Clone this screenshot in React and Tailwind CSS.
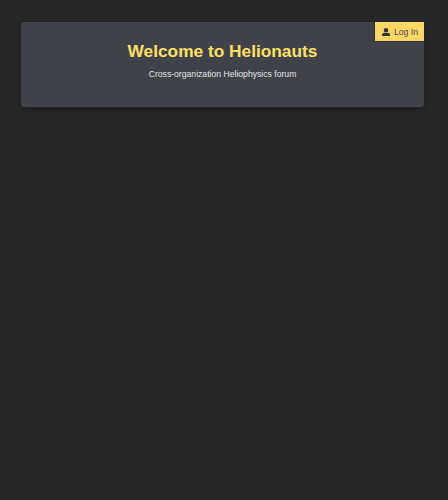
function UserIcon() {
  return (
    <svg viewBox="0 0 8 8" className="h-2 w-2 shrink-0 fill-[#30343d]" aria-hidden="true">
      <circle cx="4" cy="2.2" r="2.2" />
      <path d="M0 8V6.9C0 5.5 1 4.7 2.3 4.7C3.3 5.2 4.7 5.2 5.7 4.7C7 4.7 8 5.5 8 6.9V8Z" />
    </svg>
  );
}

export default function App() {
  return (
    <main className="min-h-screen bg-[#272727] px-[21px] pt-[22px] font-['Liberation_Sans',Arial,sans-serif]">
      <header className="flex h-[85px] w-[403px] flex-col rounded-[3px] border border-[#41454a] bg-[#3f4248] shadow-[0_2px_6px_rgba(0,0,0,0.3)]">
        <button className="-mt-px -mr-px flex h-[19px] w-[49px] items-center justify-center gap-1 self-end bg-[#fcd767] pl-px text-[8.7px] leading-none text-[#444650] shadow-[0_0_0_1px_rgba(32,38,56,0.6)]">
          <UserIcon />
          <span className="pt-px">Log In</span>
        </button>
        <div className="text-center">
          <h1 className="text-[17.3px] leading-5 font-bold text-[#ffe066]">Welcome to Helionauts</h1>
          <p className="mt-[7px] text-[8.65px] leading-3 text-[#e5e5e5]">Cross-organization Heliophysics forum</p>
        </div>
      </header>
    </main>
  );
}
